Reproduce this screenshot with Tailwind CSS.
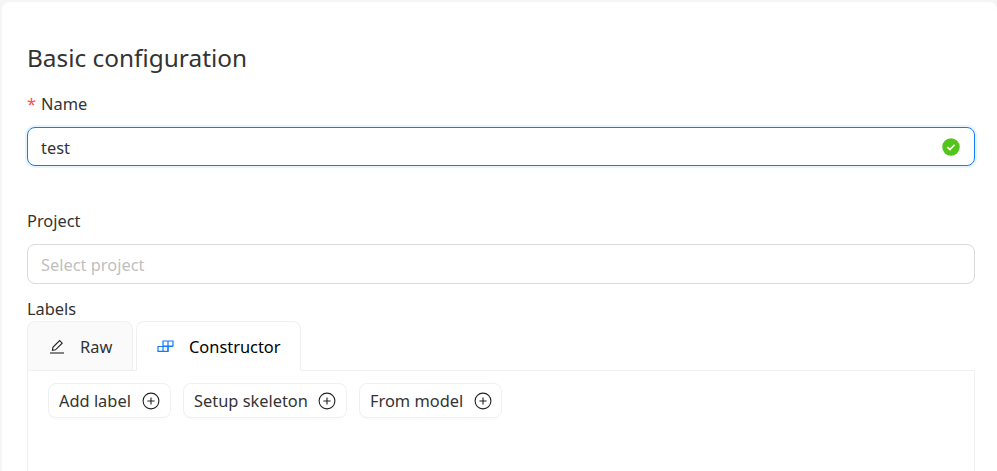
<!DOCTYPE html>
<html lang="en">
<head>
    <meta charset="UTF-8">
    <title>Basic configuration</title>
    <script src="https://cdn.jsdelivr.net/npm/@tailwindcss/browser@4"></script>
</head>
<body class="h-[471px] overflow-hidden bg-[#f5f5f5] font-['Noto_Sans',sans-serif] text-[16.4px] text-[#333]">
    <div class="ml-[2px] mt-[2px] flex h-[469px] flex-col overflow-hidden rounded-t-[8px] bg-white pl-[25px] pr-[22px] pt-[40px]">
        <h2 class="h-[32px] text-[24.4px] leading-[32px] text-[#333]">Basic configuration</h2>

        <div class="mt-[18px] flex h-[24px] items-center leading-[24px]">
            <span class="mr-[5px] text-[#ff4d4f]">*</span>
            <span>Name</span>
        </div>
        <div class="mt-[11px] flex h-[39px] shrink-0 items-center justify-between rounded-[8px] border border-[#1677ff] pl-[13px] pr-[14px] shadow-[0_0_0_2px_rgba(5,145,255,0.1)]">
            <span class="pt-[3px]">test</span>
            <svg width="18" height="18" viewBox="0 0 18 18">
                <circle cx="9" cy="9" r="8.75" fill="#52c41a"/>
                <path d="M5.4 9.2l2.5 2.4 4.7-4.9" fill="none" stroke="#fff" stroke-width="1.6"/>
            </svg>
        </div>

        <div class="mt-[43px] h-[24px] leading-[24px]">Project</div>
        <div class="mt-[11px] flex h-[40px] shrink-0 items-center rounded-[8px] border border-[#d9d9d9] pl-[13px] text-[#bfbfbf]">
            <span class="pt-[2px]">Select project</span>
        </div>

        <div class="mt-[13px] h-[24px] leading-[24px]">Labels</div>

        <div class="flex h-[50px] shrink-0 gap-[3px]">
            <div class="flex h-[50px] w-[106px] items-center gap-[15px] rounded-t-[8px] border border-[#f0f0f0] bg-[#fafafa] pl-[21px]">
                <svg width="16" height="16" viewBox="0 0 16 16" fill="none" stroke="#222" stroke-width="1.1">
                    <path d="M1 15h14"/>
                    <path d="M3.4 12.3l.5-3L10.6 2.6l2.6 2.6-6.7 6.6z"/>
                </svg>
                <span class="pt-[2px]">Raw</span>
            </div>
            <div class="z-10 flex h-[50px] w-[165px] items-center gap-[15px] rounded-t-[8px] border border-[#f0f0f0] border-b-white bg-white pl-[20px] text-[#000]">
                <svg width="17" height="14" viewBox="0 0 17 14" fill="none" stroke="#1677ff" stroke-width="1.2">
                    <path d="M1 7.5h10v4.9H1zM6 7.5v4.9"/>
                    <path d="M6 2h10v5H6zM11 2v10.4M11 7.5h5"/>
                </svg>
                <span class="pt-[2px]">Constructor</span>
            </div>
        </div>

        <div class="-mt-px grow border border-b-0 border-[#f0f0f0] px-[20px] pt-[12px]">
            <div class="flex gap-[12px]">
                <div class="flex h-[35px] w-[123px] items-center gap-[11px] rounded-[8px] border border-[#f0f0f0] pl-[10px] shadow-[0_2px_0_rgba(0,0,0,0.015)]">
                    <span class="pt-[2px]">Add label</span>
                    <svg width="18" height="18" viewBox="0 0 18 18" fill="none" stroke="#222" stroke-width="1.1"><circle cx="9" cy="9" r="7.9"/><path d="M9 5.4v7.2M5.4 9h7.2"/></svg>
                </div>
                <div class="flex h-[35px] w-[164px] items-center gap-[10px] rounded-[8px] border border-[#f0f0f0] pl-[10px] shadow-[0_2px_0_rgba(0,0,0,0.015)]">
                    <span class="pt-[2px]">Setup skeleton</span>
                    <svg width="18" height="18" viewBox="0 0 18 18" fill="none" stroke="#222" stroke-width="1.1"><circle cx="9" cy="9" r="7.9"/><path d="M9 5.4v7.2M5.4 9h7.2"/></svg>
                </div>
                <div class="flex h-[35px] w-[143px] items-center gap-[11px] rounded-[8px] border border-[#f0f0f0] pl-[10px] shadow-[0_2px_0_rgba(0,0,0,0.015)]">
                    <span class="pt-[2px]">From model</span>
                    <svg width="18" height="18" viewBox="0 0 18 18" fill="none" stroke="#222" stroke-width="1.1"><circle cx="9" cy="9" r="7.9"/><path d="M9 5.4v7.2M5.4 9h7.2"/></svg>
                </div>
            </div>
        </div>
    </div>
</body>
</html>
